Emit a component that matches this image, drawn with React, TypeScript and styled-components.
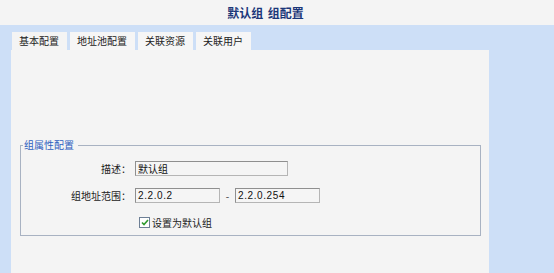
import React from "react";
import styled, { createGlobalStyle } from "styled-components";

const Global = createGlobalStyle`
  html, body { margin: 0; padding: 0; }
  body {
    background: #cddff7;
    font-family: "Noto Sans CJK SC", "Liberation Sans", sans-serif;
    font-size: 10px;
    color: #1a1a1a;
    width: 554px;
    height: 273px;
    overflow: hidden;
  }
`;

const Header = styled.div`
  height: 25px;
  background: #f4f4f4;
  display: flex;
  align-items: center;
  justify-content: center;
  padding-right: 23px;
  box-sizing: border-box;
`;

const Title = styled.h1`
  margin: 0;
  font-size: 12px;
  font-weight: bold;
  color: #1b3779;
  line-height: 14px;
  word-spacing: 2px;
`;

const Main = styled.div`
  padding: 7px 0 0 11px;
  width: 478px;
`;

const Tabs = styled.div`
  display: flex;
  gap: 3px;
  padding-left: 1px;
  height: 18px;
`;

const Tab = styled.div<{ $active?: boolean }>`
  padding: 0 8px 0 7px;
  background: ${(p) => (p.$active ? "#f4f4f4" : "#f6f6f6")};
  display: flex;
  align-items: center;
  font-size: 10px;
  line-height: 18px;
  color: #222;
`;

const Panel = styled.div`
  background: #f4f4f4;
  height: 223px;
  padding: 89px 8px 0 9px;
  box-sizing: border-box;
`;

const Group = styled.fieldset`
  margin: 0;
  border: 1px solid #a8b2c2;
  padding: 10px 0 6px 0;
`;

const Legend = styled.legend`
  color: #2f5fbf;
  font-size: 10px;
  padding: 0 4px 0 1px;
  margin-left: 2px;
  line-height: 12px;
`;

const Row = styled.div`
  display: flex;
  align-items: center;
  height: 15px;
  margin-bottom: 12px;
`;

const Label = styled.label`
  width: 110px;
  text-align: right;
  margin-right: 4px;
  font-size: 10px;
  color: #222;
`;

const Input = styled.div<{ $w: number; $mono?: boolean }>`
  width: ${(p) => p.$w}px;
  height: 15px;
  box-sizing: border-box;
  border: 1px solid #8f8f8f;
  border-right-color: #b5b5b5;
  border-bottom-color: #b5b5b5;
  background: #f5f5f5;
  display: flex;
  align-items: center;
  padding-left: 2px;
  font-size: 10px;
  font-family: ${(p) =>
    p.$mono ? `"Liberation Sans", sans-serif` : `"Noto Sans CJK SC", sans-serif`};
  letter-spacing: ${(p) => (p.$mono ? "0.6px" : "0")};
  color: #111;
`;

const Dash = styled.span`
  width: 15px;
  text-align: center;
  font-size: 10px;
  color: #333;
`;

const CheckRow = styled.div`
  display: flex;
  align-items: center;
  padding-left: 118px;
  gap: 2px;
  height: 14px;
`;

const Box = styled.span`
  width: 9px;
  height: 9px;
  border: 1px solid #6d7f95;
  background: #fff;
  display: flex;
  align-items: center;
  justify-content: center;
`;

const CheckText = styled.span`
  font-size: 10px;
  color: #222;
`;

export default function App() {
  return (
    <>
      <Global />
      <Header>
        <Title>默认组 组配置</Title>
      </Header>
      <Main>
        <Tabs>
          <Tab $active>基本配置</Tab>
          <Tab>地址池配置</Tab>
          <Tab>关联资源</Tab>
          <Tab>关联用户</Tab>
        </Tabs>
        <Panel>
          <Group>
            <Legend>组属性配置</Legend>
            <Row>
              <Label>描述：</Label>
              <Input $w={153}>默认组</Input>
            </Row>
            <Row>
              <Label>组地址范围：</Label>
              <Input $w={85} $mono>2.2.0.2</Input>
              <Dash>-</Dash>
              <Input $w={85} $mono>2.2.0.254</Input>
            </Row>
            <CheckRow>
              <Box>
                <svg width="8" height="7" viewBox="0 0 8 7">
                  <path d="M1 3.5 L3 5.5 L7 1" stroke="#2e9a2e" strokeWidth="1.6" fill="none" />
                </svg>
              </Box>
              <CheckText>设置为默认组</CheckText>
            </CheckRow>
          </Group>
        </Panel>
      </Main>
    </>
  );
}
